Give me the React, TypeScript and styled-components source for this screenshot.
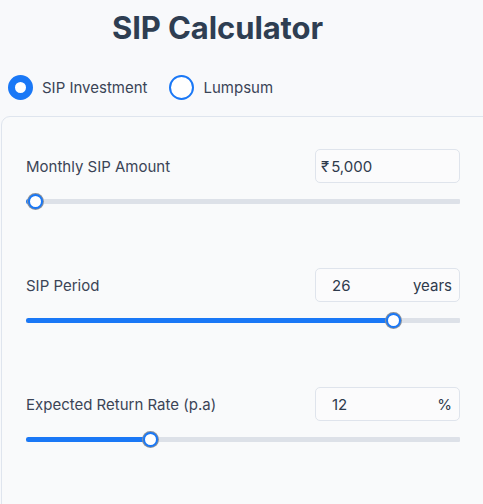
import React from "react";
import styled, { createGlobalStyle } from "styled-components";

const Global = createGlobalStyle`
  html, body { margin: 0; padding: 0; background: #f8f9fb; }
  body { font-family: Inter, "Open Sans", sans-serif; color: #334155; overflow: hidden; }
`;

const Page = styled.div`
  width: 483px;
  height: 504px;
  overflow: hidden;
  display: flex;
  flex-direction: column;
`;

const Title = styled.h1`
  margin: 0;
  padding: 10px 0 0 112px;
  height: 50px;
  font-size: 31px;
  font-weight: 700;
  color: #2e3e52;
  letter-spacing: -0.1px;
  line-height: 36px;
`;

const RadioRow = styled.div`
  display: flex;
  align-items: center;
  gap: 22px;
  padding-left: 8px;
  margin-top: 14px;
  height: 26px;
`;

const RadioOption = styled.label`
  display: flex;
  align-items: center;
  gap: 9px;
  font-size: 15px;
  color: #3a4456;
`;

const RadioDot = styled.span<{ $on: boolean }>`
  box-sizing: border-box;
  width: 25px;
  height: 25px;
  border-radius: 50%;
  border: ${(p) => (p.$on ? "7.5px solid #1a78f6" : "2px solid #1a78f6")};
  background: #fff;
`;

const Card = styled.div`
  margin: 16px -30px -30px 1px;
  border: 1px solid #dfe5ee;
  border-radius: 9px;
  background: #f9fafb;
  padding: 32px 52px 40px 24px;
  display: flex;
  flex-direction: column;
  gap: 58px;
  flex: 1;
`;

const Field = styled.div`
  display: flex;
  flex-direction: column;
  gap: 10px;
`;

const FieldHead = styled.div`
  display: flex;
  align-items: center;
  justify-content: space-between;
`;

const Label = styled.span`
  font-size: 15px;
  color: #3b4456;
`;

const InputBox = styled.div`
  box-sizing: border-box;
  width: 145px;
  height: 34px;
  border: 1px solid #dfe4ec;
  border-radius: 5px;
  background: #fbfbfc;
  display: flex;
  align-items: center;
  justify-content: space-between;
  padding: 0 7px 0 5px;
  font-size: 15px;
  color: #2e3a4c;
`;

const Value = styled.span<{ $indent: boolean }>`
  padding-left: ${(p) => (p.$indent ? "11px" : "0")};
`;

const Prefix = styled.span`
  margin-right: 2px;
`;

const Suffix = styled.span`
  font-size: 15px;
  color: #2e3a4c;
`;

const Track = styled.div`
  position: relative;
  height: 5px;
  background: #dde1e8;
  border-radius: 1px;
  margin: 6px 0;
`;

const Fill = styled.div`
  height: 100%;
  background: #1a78f6;
  border-radius: 3px 0 0 3px;
`;

const Thumb = styled.div`
  position: absolute;
  top: 50%;
  box-sizing: border-box;
  width: 15px;
  height: 15px;
  margin: -7.5px 0 0 -7.5px;
  border-radius: 50%;
  background: #fff;
  border: 2px solid #1a78f6;
  box-shadow: 0 0 0 1px #8a919c;
`;

type FieldData = {
  label: string;
  value: string;
  prefix?: string;
  suffix?: string;
  pct: number;
};

const fields: FieldData[] = [
  { label: "Monthly SIP Amount", value: "5,000", prefix: "₹", pct: 2.3 },
  { label: "SIP Period", value: "26", suffix: "years", pct: 84.6 },
  { label: "Expected Return Rate (p.a)", value: "12", suffix: "%", pct: 28.8 },
];

function Slider({ pct }: { pct: number }) {
  return (
    <Track>
      <Fill style={{ width: `${pct}%` }} />
      <Thumb style={{ left: `${pct}%` }} />
    </Track>
  );
}

export default function App() {
  return (
    <Page>
      <Global />
      <Title>SIP Calculator</Title>
      <RadioRow>
        <RadioOption>
          <RadioDot $on={true} />
          SIP Investment
        </RadioOption>
        <RadioOption>
          <RadioDot $on={false} />
          Lumpsum
        </RadioOption>
      </RadioRow>
      <Card>
        {fields.map((f) => (
          <Field key={f.label}>
            <FieldHead>
              <Label>{f.label}</Label>
              <InputBox>
                <Value $indent={!f.prefix}>
                  {f.prefix && <Prefix>{f.prefix}</Prefix>}
                  {f.value}
                </Value>
                {f.suffix && <Suffix>{f.suffix}</Suffix>}
              </InputBox>
            </FieldHead>
            <Slider pct={f.pct} />
          </Field>
        ))}
      </Card>
    </Page>
  );
}
